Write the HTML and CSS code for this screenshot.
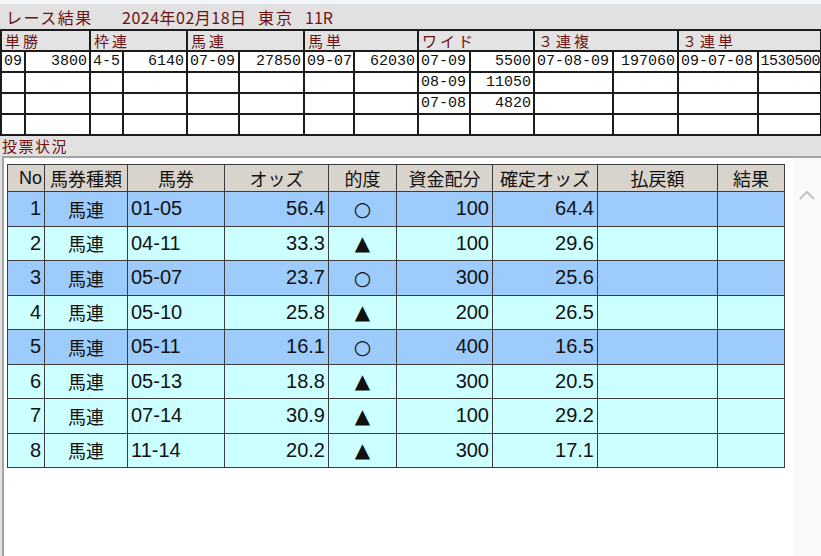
FILE: index.html
```html
<!DOCTYPE html>
<html lang="ja">
<head>
    <meta charset="UTF-8">
    <title>レース結果</title>
    <link rel="stylesheet" href="styles.css">
</head>
<body>
<div class="topstrip"></div>

<div class="title">
    <span class="title-main">レース結果</span>
    <span class="title-date">2024年02月18日</span>
    <span class="title-place">東京</span>
    <span class="title-race">11R</span>
</div>

<table class="result">
    <colgroup>
        <col style="width:24px"><col style="width:65px">
        <col style="width:33px"><col style="width:64px">
        <col style="width:52px"><col style="width:65px">
        <col style="width:50px"><col style="width:64px">
        <col style="width:52px"><col style="width:64px">
        <col style="width:79px"><col style="width:65px">
        <col style="width:80px"><col style="width:63px">
    </colgroup>
    <tr class="result-head">
        <th colspan="2">単勝</th>
        <th colspan="2">枠連</th>
        <th colspan="2">馬連</th>
        <th colspan="2">馬単</th>
        <th colspan="2">ワイド</th>
        <th colspan="2">３連複</th>
        <th colspan="2">３連単</th>
    </tr>
    <tr>
        <td>09</td><td class="num">3800</td>
        <td>4-5</td><td class="num">6140</td>
        <td>07-09</td><td class="num">27850</td>
        <td>09-07</td><td class="num">62030</td>
        <td>07-09</td><td class="num">5500</td>
        <td>07-08-09</td><td class="num">197060</td>
        <td>09-07-08</td><td class="num tight">1530500</td>
    </tr>
    <tr>
        <td></td><td></td><td></td><td></td><td></td><td></td><td></td><td></td>
        <td>08-09</td><td class="num">11050</td>
        <td></td><td></td><td></td><td></td>
    </tr>
    <tr>
        <td></td><td></td><td></td><td></td><td></td><td></td><td></td><td></td>
        <td>07-08</td><td class="num">4820</td>
        <td></td><td></td><td></td><td></td>
    </tr>
    <tr>
        <td></td><td></td><td></td><td></td><td></td><td></td><td></td>
        <td></td><td></td><td></td><td></td><td></td><td></td><td></td>
    </tr>
</table>

<div class="section-label">投票状況</div>

<div class="panel">
    <div class="panel-body">
        <table class="bets">
            <colgroup>
                <col style="width:37px"><col style="width:83px">
                <col style="width:97px"><col style="width:104px">
                <col style="width:68px"><col style="width:96px">
                <col style="width:105px"><col style="width:120px">
                <col style="width:67px">
            </colgroup>
            <thead>
                <tr>
                    <th class="no-head">No</th>
                    <th>馬券種類</th>
                    <th>馬券</th>
                    <th>オッズ</th>
                    <th>的度</th>
                    <th>資金配分</th>
                    <th>確定オッズ</th>
                    <th>払戻額</th>
                    <th>結果</th>
                </tr>
            </thead>
            <tbody>
                <tr class="row-a"><td class="r">1</td><td class="kind">馬連</td><td class="l">01-05</td><td class="r">56.4</td><td class="c">○</td><td class="r">100</td><td class="r">64.4</td><td></td><td></td></tr>
                <tr class="row-b"><td class="r">2</td><td class="kind">馬連</td><td class="l">04-11</td><td class="r">33.3</td><td class="c">▲</td><td class="r">100</td><td class="r">29.6</td><td></td><td></td></tr>
                <tr class="row-a"><td class="r">3</td><td class="kind">馬連</td><td class="l">05-07</td><td class="r">23.7</td><td class="c">○</td><td class="r">300</td><td class="r">25.6</td><td></td><td></td></tr>
                <tr class="row-b"><td class="r">4</td><td class="kind">馬連</td><td class="l">05-10</td><td class="r">25.8</td><td class="c">▲</td><td class="r">200</td><td class="r">26.5</td><td></td><td></td></tr>
                <tr class="row-a"><td class="r">5</td><td class="kind">馬連</td><td class="l">05-11</td><td class="r">16.1</td><td class="c">○</td><td class="r">400</td><td class="r">16.5</td><td></td><td></td></tr>
                <tr class="row-b"><td class="r">6</td><td class="kind">馬連</td><td class="l">05-13</td><td class="r">18.8</td><td class="c">▲</td><td class="r">300</td><td class="r">20.5</td><td></td><td></td></tr>
                <tr class="row-b"><td class="r">7</td><td class="kind">馬連</td><td class="l">07-14</td><td class="r">30.9</td><td class="c">▲</td><td class="r">100</td><td class="r">29.2</td><td></td><td></td></tr>
                <tr class="row-b"><td class="r">8</td><td class="kind">馬連</td><td class="l">11-14</td><td class="r">20.2</td><td class="c">▲</td><td class="r">300</td><td class="r">17.1</td><td></td><td></td></tr>
            </tbody>
        </table>
    </div>
    <div class="scrollbar">
        <svg width="16" height="10" viewBox="0 0 16 10">
            <polyline points="1,9 8,2 15,9" fill="none" stroke="#c4c4c4" stroke-width="2.2"/>
        </svg>
    </div>
</div>
</body>
</html>
```

FILE: styles.css
```css
html, body {
    height: 100%;
}

body {
    margin: 0;
    background-color: #e1e1e1;
    font-family: "Liberation Sans", "Noto Sans CJK JP", sans-serif;
    display: flex;
    flex-direction: column;
    overflow: hidden;
}

.topstrip {
    height: 4px;
    flex-shrink: 0;
    background-color: #f3f6f9;
}

.title {
    height: 25px;
    flex-shrink: 0;
    display: flex;
    align-items: center;
    padding-left: 6px;
    color: #6e1212;
    font-family: "Noto Sans CJK JP", sans-serif;
    font-size: 16px;
}

.title-main {
    letter-spacing: 1.5px;
    width: 116px;
}

.title-date {
    letter-spacing: 0.5px;
    width: 136px;
}

.title-place {
    letter-spacing: 2px;
    width: 47px;
}

/* race result grid */
.result {
    border-collapse: collapse;
    table-layout: fixed;
    width: 820px;
    flex-shrink: 0;
    font-family: "Liberation Mono", "Noto Sans CJK JP", monospace;
    font-size: 15px;
    line-height: 17px;
}

.result th,
.result td {
    border: 2px solid #1c1c1c;
    height: 21px;
    padding: 0 2px;
    white-space: nowrap;
    overflow: hidden;
    box-sizing: border-box;
}

.result td {
    background-color: #fff;
    color: #111;
}

.result-head th {
    background-color: #e3e3e3;
    color: #6e1212;
    font-family: "Noto Sans CJK JP", sans-serif;
    font-size: 15px;
    font-weight: normal;
    text-align: left;
    letter-spacing: 3px;
    padding-left: 3px;
}

.result .num {
    text-align: right;
}

.result .tight {
    padding: 0;
    letter-spacing: -0.5px;
}

.section-label {
    height: 20px;
    flex-shrink: 0;
    line-height: 20px;
    padding-left: 2px;
    color: #6e1212;
    font-family: "Noto Sans CJK JP", sans-serif;
    font-size: 15px;
    letter-spacing: 1.5px;
}

/* bet list */
.panel {
    flex: 1;
    display: flex;
    margin-left: 2px;
    background-color: #fff;
    border-top: 2px solid #a3a3a3;
    border-left: 2px solid #a3a3a3;
}

.panel-body {
    flex: 1;
    padding: 6px 0 0 3px;
}

.bets {
    border-collapse: collapse;
    table-layout: fixed;
    width: 777px;
    font-size: 20px;
    color: #111;
}

.bets th,
.bets td {
    border: 1px solid #3c3c3c;
    padding: 0 3px;
    white-space: nowrap;
}

.bets th {
    height: 26px;
    background-color: #d8d4cc;
    font-family: "Noto Sans CJK JP", sans-serif;
    font-size: 18px;
    font-weight: normal;
}

.bets th.no-head {
    font-family: "Liberation Sans", sans-serif;
    text-align: right;
    padding-right: 2px;
}

.bets td {
    height: 33.5px;
}

.row-a td {
    background-color: #9dcbfb;
}

.row-b td {
    background-color: #ccffff;
}

.bets .r {
    text-align: right;
}

.bets .l {
    text-align: left;
}

.bets .c {
    text-align: center;
    font-family: "DejaVu Sans", sans-serif;
    font-size: 20px;
}

.bets .kind {
    text-align: center;
    font-family: "Noto Sans CJK JP", sans-serif;
    font-size: 18px;
}

.scrollbar {
    width: 28px;
    background-color: #f9f9f9;
    display: flex;
    justify-content: center;
    padding-top: 32px;
    box-sizing: border-box;
}
```
